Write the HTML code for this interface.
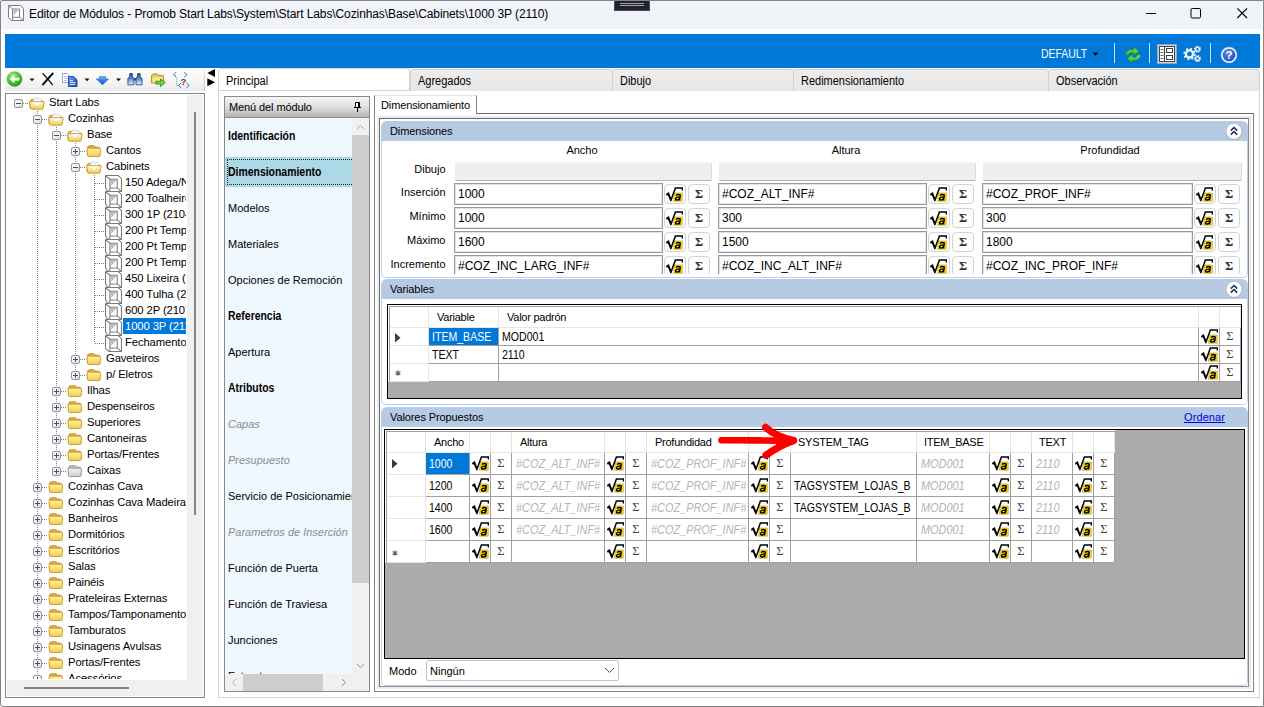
<!DOCTYPE html><html><head><meta charset="utf-8"><title>Editor de Módulos</title><style>
*{box-sizing:border-box;margin:0;padding:0}
html,body{width:1264px;height:707px;overflow:hidden;background:#fff}
body{font-family:"Liberation Sans",sans-serif;font-size:11px;color:#000;position:relative}
.a{position:absolute}
.t{position:absolute;white-space:pre;line-height:14px;height:14px}
.t12{font-size:12px}
.hdr{position:absolute;background:#b6cae4;border-radius:6px 6px 0 0;height:20px}
.hdr span{position:absolute;left:9px;top:3px;font-size:11px;letter-spacing:-0.1px;line-height:14px;white-space:pre}
.sec{position:absolute;border:1px solid #bdd0ea;border-top:none;border-radius:0 0 5px 5px;background:#fff}
.inp{position:absolute;height:22px;border:1px solid #989aa2;background:#fff;font-size:12px;line-height:20px;padding-left:3px;white-space:pre;overflow:hidden;box-shadow:inset 0 0 0 1px #e3e3e3}
.gin{position:absolute;height:19px;background:#efefef;border-bottom:1px solid #b4b4b4;border-right:1px solid #dadada;border-top:1px solid #f6f6f6;border-radius:2px}
.btn{position:absolute;width:22px;height:20px;border:1px solid #d2d2d2;border-radius:4px;background:#fdfdfd}
.lbl{position:absolute;text-align:right;white-space:pre;line-height:14px;font-size:11px}
.grid{position:absolute;background:#ababab;border:1px solid #000;overflow:hidden}
.cell{position:absolute;background:#fff;border-right:1px solid #a0a0a0;border-bottom:1px solid #a0a0a0;white-space:pre;overflow:hidden;font-size:12px}
.cell>span{display:inline-block;transform-origin:0 50%;transform:scaleX(.88)}
.hc{position:absolute;background:#fff;border-right:1px solid #e5e5e5;border-bottom:1px solid #e5e5e5;white-space:pre;overflow:hidden;font-size:11px;letter-spacing:-0.25px}
.gi{color:#b4b4b4;font-style:italic}
.cell.gi>span{transform:scaleX(.91);margin-left:1px}
.sel{background:#0078d7;color:#fff}
.tr{position:absolute;white-space:pre;line-height:16px;height:16px;font-size:11.25px;letter-spacing:-0.1px}
.mi{position:absolute;left:229px;white-space:pre;line-height:14px;font-size:11px}
.mb{font-weight:bold;font-size:12px;transform-origin:0 50%;transform:scaleX(.87)}
.mg{font-style:italic;color:#8c8c8c}
.tab{position:absolute;top:69px;height:22px;border:1px solid #d0d0d0;border-bottom:none;border-radius:4px 4px 0 0;background:linear-gradient(#ededed,#e6e6e6);font-size:12px;line-height:14px;white-space:pre}
.tab span{position:absolute;left:7px;top:4px;transform-origin:0 50%;transform:scaleX(.915)}
</style></head><body>
<svg width="0" height="0" style="position:absolute"><defs>
<linearGradient id="fog" x1="0" y1="0" x2="0" y2="1"><stop offset="0" stop-color="#fffadc"/><stop offset="1" stop-color="#f3c850"/></linearGradient>
<linearGradient id="fcg" x1="0" y1="0" x2="0" y2="1"><stop offset="0" stop-color="#fff6a8"/><stop offset="1" stop-color="#f5ca48"/></linearGradient>
<linearGradient id="fgg" x1="0" y1="0" x2="0" y2="1"><stop offset="0" stop-color="#f4f4f4"/><stop offset="1" stop-color="#cfcfcf"/></linearGradient>
<symbol id="sq" viewBox="0 0 17 16">
<path d="M8.600 6H16.300V14.200H7.400z" fill="#ffde0a" stroke="#8a6d00" stroke-width=".4"/>
<path d="M0.300 7.900 2.300 6.600 4.700 12.600" fill="none" stroke="#000" stroke-width="2"/>
<path d="M4.600 14.300 9.400 1H16.400V3.600" fill="none" stroke="#000" stroke-width="1.500"/>
<path d="M10 8.500Q12.200 6.700 14.300 8.100L13.400 13.400" stroke="#000" stroke-width="1.500" fill="none" stroke-linejoin="round"/><path d="M13.800 10.300Q10 9.700 9.500 11.700Q9.600 13.300 11.300 13Q13 12.600 13.600 11.200" stroke="#000" stroke-width="1.400" fill="none"/>
</symbol>
<symbol id="fo" viewBox="0 0 16 16">
<path d="M1 5 2.300 3.300H5.800L6.800 5H14V12H1z" fill="#e6b444" stroke="#c4922a" stroke-width=".9"/>
<path d="M2.600 6 7 1.300 9.300 3.600 10.700 2.200 14.200 6z" fill="#fff" stroke="#8da2d2" stroke-width=".6"/>
<path d="M0.700 5.700H15.200L14 12.600Q13.900 13.200 13.200 13.200H2.600Q1.900 13.200 1.800 12.600z" fill="url(#fog)" stroke="#cc9c30" stroke-width=".9"/>
<path d="M3.300 6.200 8 10 12.700 6.200z" fill="#fff" opacity=".75"/>
</symbol>
<symbol id="fc" viewBox="0 0 16 16">
<path d="M1.500 4Q1.500 1.700 3.500 1.700H7.500Q9 1.700 9.500 3.200H12.500Q13.800 3.200 13.800 4.700V11H1.500z" fill="#e0ae3e" stroke="#bc8c26" stroke-width=".9"/>
<path d="M1 5.200Q1 4.200 2.200 4.200H13.600Q14.600 4.200 14.500 5.200L14.100 11.600Q14 12.500 13 12.500H2.500Q1.500 12.500 1.500 11.600z" fill="url(#fcg)" stroke="#c8982c" stroke-width=".9"/>
</symbol>
<symbol id="fg" viewBox="0 0 16 16">
<path d="M1.500 4Q1.500 1.700 3.500 1.700H7.500Q9 1.700 9.500 3.200H12.500Q13.800 3.200 13.800 4.700V11H1.500z" fill="#c4c4c4" stroke="#8c8c8c" stroke-width=".9"/>
<path d="M1 5.200Q1 4.200 2.200 4.200H13.600Q14.600 4.200 14.500 5.200L14.100 11.600Q14 12.500 13 12.500H2.500Q1.500 12.500 1.500 11.600z" fill="url(#fgg)" stroke="#909090" stroke-width=".9"/>
</symbol>
<symbol id="mo" viewBox="0 0 16 16">
<path d="M0.500 0.500H12.500L15.500 3.500V15.500H3.500L0.500 12.500Z" fill="#fff" stroke="#7c7c7c"/>
<path d="M0.500 0.500 4.600 4M4.600 4V15.500M4.600 4H11.500V12.300H4.600M11.500 12.300 15.500 15.500" fill="none" stroke="#7c7c7c"/>
<path d="M5.300 4.700H10.900L5.300 10.500Z" fill="#bdbdbd"/>
</symbol>
<symbol id="chev" viewBox="0 0 18 18">
<circle cx="9.200" cy="9.900" r="8.300" fill="#8c96a8" opacity=".5"/>
<circle cx="9" cy="9.300" r="7.900" fill="#fff" stroke="#b8bec8" stroke-width=".7"/>
<path d="M5.800 8.600 9 5.500 12.200 8.600M5.800 12.600 9 9.500 12.200 12.600" fill="none" stroke="#1c2a5a" stroke-width="1.500"/>
</symbol>
</defs></svg>
<div class="a" style="left:0;top:0;width:1264px;height:707px;background:#fff"></div>
<div class="a" style="left:1px;top:1px;width:1261px;height:28px;background:#f0f3fa"></div>
<div class="a" style="left:0;top:0;width:1264px;height:707px;border:1px solid #858585;border-radius:2px 0 0 3px"></div>
<div class="a" style="left:614px;top:1px;width:36px;height:10px;background:#22222e;border:1px solid #4a4a52;border-top:none"><div class="a" style="left:5px;top:2px;width:24px;height:1px;background:#a4a4a8"></div><div class="a" style="left:5px;top:4px;width:24px;height:1px;background:#a4a4a8"></div></div>
<svg class="a" style="left:8px;top:5px" width="16" height="16"><use href="#mo"/></svg>
<div class="t" style="left:29px;top:7px;font-size:12px;letter-spacing:-0.1px;line-height:14px">Editor de Módulos - Promob Start Labs\System\Start Labs\Cozinhas\Base\Cabinets\1000 3P (2110)</div>
<svg class="a" style="left:1140px;top:4px" width="115" height="20"><path d="M6 9.5H16" stroke="#000" stroke-width="1"/><rect x="51" y="4.5" width="9.5" height="9.5" rx="1.3" fill="none" stroke="#000" stroke-width="1"/><path d="M97.300 4.300 107 14M107 4.300 97.300 14" stroke="#000" stroke-width="1.1"/></svg>
<div class="a" style="left:5px;top:34px;width:1255px;height:34px;background:#0078d7"></div>
<div class="t" style="left:1041px;top:47px;font-size:12px;color:#fff;transform-origin:0 50%;transform:scaleX(.87)">DEFAULT</div>
<svg class="a" style="left:1092px;top:52px" width="8" height="5"><path d="M0.500 0.500h6L3.500 3.800z" fill="#000"/></svg>
<div class="a" style="left:1114px;top:43px;width:1px;height:20px;background:#cfe3f6"></div>
<div class="a" style="left:1149px;top:43px;width:1px;height:20px;background:#cfe3f6"></div>
<div class="a" style="left:1210px;top:43px;width:1px;height:20px;background:#cfe3f6"></div>
<svg class="a" style="left:1124px;top:46px" width="18" height="18" viewBox="0 0 18 18">
<defs><linearGradient id="rg" x1="0" y1="0" x2="0" y2="1"><stop offset="0" stop-color="#8cea5c"/><stop offset="1" stop-color="#2fae22"/></linearGradient></defs>
<path d="M1.500 8.800C1.800 4.800 5.800 3 9.600 4V1.200L15 5.300 9.600 9.300V6.700C7 6 4.800 6.800 4.400 9.400z" fill="url(#rg)" stroke="#2a9220" stroke-width=".6"/>
<path d="M16.500 9.200C16.200 13.200 12.200 15 8.400 14V16.800L3 12.700 8.400 8.700V11.300C11 12 13.200 11.200 13.600 8.600z" fill="url(#rg)" stroke="#2a9220" stroke-width=".6"/></svg>
<div class="a" style="left:1157px;top:44px;width:20px;height:20px;background:#c9d6e6;border:1px solid #8ea6c4"></div>
<svg class="a" style="left:1159px;top:46px" width="16" height="16" viewBox="0 0 16 16">
<rect x=".5" y=".5" width="15" height="15" fill="#fff" stroke="#444" stroke-width="1"/>
<path d="M5.5 .5v15" stroke="#444"/>
<path d="M1.5 3.5h3M1.5 6.5h3M1.5 9.5h3M1.5 12.5h3" stroke="#666"/>
<rect x="7.5" y="2.5" width="6" height="4" fill="#fff" stroke="#444"/>
<rect x="7.5" y="9.5" width="6" height="4" fill="#fff" stroke="#444"/></svg>
<svg class="a" style="left:1183px;top:45px" width="19" height="18" viewBox="0 0 19 18">
<g fill="none" stroke="#f4f8fc">
<circle cx="6.5" cy="9" r="3.6" stroke-width="2.3"/>
<circle cx="6.5" cy="9" r="5.3" stroke-width="1.8" stroke-dasharray="2 2.15"/>
<circle cx="14.5" cy="4.2" r="1.9" stroke-width="1.3"/>
<circle cx="14.5" cy="4.2" r="3" stroke-width="1.1" stroke-dasharray="1.2 1.15"/>
<circle cx="14.5" cy="13.6" r="1.9" stroke-width="1.3"/>
<circle cx="14.5" cy="13.6" r="3" stroke-width="1.1" stroke-dasharray="1.2 1.15"/>
</g></svg>
<svg class="a" style="left:1220px;top:46px" width="18" height="18" viewBox="0 0 18 18">
<defs><radialGradient id="hg" cx=".4" cy=".3" r=".8"><stop offset="0" stop-color="#5c8cf0"/><stop offset="1" stop-color="#1d47c0"/></radialGradient></defs>
<circle cx="9" cy="9" r="8" fill="#eef3fb" stroke="#9fb8e4" stroke-width=".6"/>
<circle cx="9" cy="9" r="6.3" fill="url(#hg)"/>
<text x="9" y="13.2" text-anchor="middle" font-family="Liberation Sans" font-weight="bold" font-size="11.5" fill="#fff">?</text></svg>
<div class="a" style="left:5px;top:68px;width:200px;height:23px;background:linear-gradient(#fefefe,#f6f6f6 55%,#ebebeb);border-radius:0 0 0 3px"></div>
<svg class="a" style="left:5px;top:69px" width="200" height="22" viewBox="5 69 200 22">
<defs><radialGradient id="gg" cx=".38" cy=".28" r=".85"><stop offset="0" stop-color="#a6ee78"/><stop offset=".55" stop-color="#3fc02a"/><stop offset="1" stop-color="#168a14"/></radialGradient>
<linearGradient id="pg" x1="0" y1="0" x2="1" y2="1"><stop offset="0" stop-color="#6f9cec"/><stop offset="1" stop-color="#1a48ac"/></linearGradient>
<linearGradient id="bg2" x1="0" y1="0" x2="0" y2="1"><stop offset="0" stop-color="#2c4f9a"/><stop offset=".45" stop-color="#5f86cc"/><stop offset="1" stop-color="#eef4fd"/></linearGradient>
<linearGradient id="ag" x1="0" y1="0" x2="0" y2="1"><stop offset="0" stop-color="#7ab4f6"/><stop offset=".5" stop-color="#2f7ee0"/><stop offset="1" stop-color="#1c5cc0"/></linearGradient></defs>
<circle cx="14.600" cy="79.100" r="7.400" fill="url(#gg)" stroke="#27902a" stroke-width=".5"/>
<path d="M9.800 79.100 14.300 74.700V77.700H19.400V80.500H14.300V83.500z" fill="#fff"/>
<path d="M29.500 78.500h5l-2.500 2.800z" fill="#111"/>
<path d="M42.600 73.200C46 77 50 81.500 52.800 85" stroke="#222" stroke-width="1.300" fill="none"/><path d="M53.200 73C49.500 77 45.500 81.500 42.400 85.200" stroke="#111" stroke-width="1.900" fill="none"/>
<path d="M62.500 73.500h4.700l2.800 2.800v6.200h-7.500z" fill="#fff" stroke="#7f9ed6" stroke-width=".9"/>
<path d="M64 76.500h3.500M64 78.500h4M64 80.500h3" stroke="#8fb0e8" stroke-width=".8"/>
<path d="M68.500 76.500h5.200l3.300 3.300v6.700h-8.500z" fill="url(#pg)" stroke="#1d3f94" stroke-width=".9"/>
<path d="M70 80.500h3M70 82.500h5.500M70 84.500h5.500" stroke="#e8f0ff" stroke-width=".9"/>
<path d="M84.500 78.500h5l-2.500 2.800z" fill="#111"/>
<path d="M99.300 76.700h6.300v2.300h3l-6.100 5.700-6.200-5.700h3z" fill="url(#ag)" stroke="#1d57b4" stroke-width=".6"/>
<path d="M116 78.500h5l-2.500 2.800z" fill="#111"/>
<g stroke="#1d3870" stroke-width=".8"><path d="M129.800 73.600h2.600v2.600l1.500 2.300v6.300h-6v-6.300l1.900-2.300z" fill="url(#bg2)"/><path d="M137.500 73.600h2.600v2.600l1.900 2.300v6.300h-6v-6.300l1.500-2.300z" fill="url(#bg2)"/></g>
<path d="M133.900 78h2.100v2.600h-2.100z" fill="#2c4f9a"/>
<path d="M151.500 75.500 153 74h4.500l1 1.500h5v7.500h-12z" fill="#eec75c" stroke="#b08828" stroke-width=".9"/>
<path d="M152.500 77.200h10.500v5.300h-10.500z" fill="#fbe48e"/>
<path d="M155.800 81.300h4.700v-2.400l4.800 3.800-4.800 3.800v-2.400h-4.700z" fill="#6fd83a" stroke="#2a8a18" stroke-width=".8"/>
<g fill="none" stroke="#1f6be6" stroke-width="1"><path d="M176.200 72.300 173.600 74.700 176.200 77.100M184.300 72.300 186.900 74.700 184.300 77.100M181 83 178.400 85.400 181 87.800M186.500 83 189.100 85.400 186.500 87.800"/><path d="M176.700 77.500V85.400H178.500" stroke="#25a8e8" stroke-dasharray="1 1"/></g>
<text x="180.600" y="85.200" font-family="Liberation Sans" font-weight="bold" font-size="9.500" fill="#6a3a12">?</text>
</svg>
<div class="a" style="left:204px;top:70px;width:1px;height:21px;background:linear-gradient(#e4e4e4,#bdbdbd)"></div>
<svg class="a" style="left:207px;top:69px" width="9" height="18"><path d="M8 0V8L0.300 4zM0.300 9.300V17.300L8 13.300z" fill="#000"/></svg>
<div class="a" style="left:5px;top:93px;width:200px;height:605px;border:1px solid #828790;background:#fff"></div>
<div class="a" style="left:187px;top:95px;width:16px;height:585px;background:#f0f0f0"></div>
<div class="a" style="left:7px;top:680px;width:196px;height:16px;background:#f0f0f0"></div>
<div class="a" style="left:194px;top:112px;width:2px;height:403px;background:#848484"></div>
<div class="a" style="left:24px;top:687px;width:105px;height:2px;background:#848484"></div>
<div class="a" style="left:6px;top:95px;width:180px;height:584px;overflow:hidden">
<svg class="a" style="left:0;top:0" width="181" height="600" shape-rendering="crispEdges"><defs><linearGradient id="bxg" x1="0" y1="0" x2="1" y2="1"><stop offset="0" stop-color="#fff"/><stop offset="1" stop-color="#dcdcdc"/></linearGradient></defs><path d="M17 8.5H23" stroke="#808080" stroke-width="1" stroke-dasharray="1 1"/><path d="M36 24.5H42" stroke="#808080" stroke-width="1" stroke-dasharray="1 1"/><path d="M55 40.5H61" stroke="#808080" stroke-width="1" stroke-dasharray="1 1"/><path d="M74 56.5H80" stroke="#808080" stroke-width="1" stroke-dasharray="1 1"/><path d="M74 72.5H80" stroke="#808080" stroke-width="1" stroke-dasharray="1 1"/><path d="M89 88.5H99" stroke="#808080" stroke-width="1" stroke-dasharray="1 1"/><path d="M89 104.5H99" stroke="#808080" stroke-width="1" stroke-dasharray="1 1"/><path d="M89 120.5H99" stroke="#808080" stroke-width="1" stroke-dasharray="1 1"/><path d="M89 136.5H99" stroke="#808080" stroke-width="1" stroke-dasharray="1 1"/><path d="M89 152.5H99" stroke="#808080" stroke-width="1" stroke-dasharray="1 1"/><path d="M89 168.5H99" stroke="#808080" stroke-width="1" stroke-dasharray="1 1"/><path d="M89 184.5H99" stroke="#808080" stroke-width="1" stroke-dasharray="1 1"/><path d="M89 200.5H99" stroke="#808080" stroke-width="1" stroke-dasharray="1 1"/><path d="M89 216.5H99" stroke="#808080" stroke-width="1" stroke-dasharray="1 1"/><path d="M89 232.5H99" stroke="#808080" stroke-width="1" stroke-dasharray="1 1"/><path d="M89 248.5H99" stroke="#808080" stroke-width="1" stroke-dasharray="1 1"/><path d="M74 264.5H80" stroke="#808080" stroke-width="1" stroke-dasharray="1 1"/><path d="M74 280.5H80" stroke="#808080" stroke-width="1" stroke-dasharray="1 1"/><path d="M55 296.5H61" stroke="#808080" stroke-width="1" stroke-dasharray="1 1"/><path d="M55 312.5H61" stroke="#808080" stroke-width="1" stroke-dasharray="1 1"/><path d="M55 328.5H61" stroke="#808080" stroke-width="1" stroke-dasharray="1 1"/><path d="M55 344.5H61" stroke="#808080" stroke-width="1" stroke-dasharray="1 1"/><path d="M55 360.5H61" stroke="#808080" stroke-width="1" stroke-dasharray="1 1"/><path d="M55 376.5H61" stroke="#808080" stroke-width="1" stroke-dasharray="1 1"/><path d="M36 392.5H42" stroke="#808080" stroke-width="1" stroke-dasharray="1 1"/><path d="M36 408.5H42" stroke="#808080" stroke-width="1" stroke-dasharray="1 1"/><path d="M36 424.5H42" stroke="#808080" stroke-width="1" stroke-dasharray="1 1"/><path d="M36 440.5H42" stroke="#808080" stroke-width="1" stroke-dasharray="1 1"/><path d="M36 456.5H42" stroke="#808080" stroke-width="1" stroke-dasharray="1 1"/><path d="M36 472.5H42" stroke="#808080" stroke-width="1" stroke-dasharray="1 1"/><path d="M36 488.5H42" stroke="#808080" stroke-width="1" stroke-dasharray="1 1"/><path d="M36 504.5H42" stroke="#808080" stroke-width="1" stroke-dasharray="1 1"/><path d="M36 520.5H42" stroke="#808080" stroke-width="1" stroke-dasharray="1 1"/><path d="M36 536.5H42" stroke="#808080" stroke-width="1" stroke-dasharray="1 1"/><path d="M36 552.5H42" stroke="#808080" stroke-width="1" stroke-dasharray="1 1"/><path d="M36 568.5H42" stroke="#808080" stroke-width="1" stroke-dasharray="1 1"/><path d="M36 584.5H42" stroke="#808080" stroke-width="1" stroke-dasharray="1 1"/><path d="M31.5 16V584" stroke="#808080" stroke-width="1" stroke-dasharray="1 1"/><path d="M50.5 32V376" stroke="#808080" stroke-width="1" stroke-dasharray="1 1"/><path d="M69.5 48V280" stroke="#808080" stroke-width="1" stroke-dasharray="1 1"/><path d="M88.5 80V248" stroke="#808080" stroke-width="1" stroke-dasharray="1 1"/><rect x="8.5" y="4.5" width="8" height="8" rx="1.500" fill="url(#bxg)" stroke="#959595" shape-rendering="auto"/><path d="M10 8.5H15" stroke="#3a4c92" stroke-width="1"/><rect x="27.5" y="20.5" width="8" height="8" rx="1.500" fill="url(#bxg)" stroke="#959595" shape-rendering="auto"/><path d="M29 24.5H34" stroke="#3a4c92" stroke-width="1"/><rect x="46.5" y="36.5" width="8" height="8" rx="1.500" fill="url(#bxg)" stroke="#959595" shape-rendering="auto"/><path d="M48 40.5H53" stroke="#3a4c92" stroke-width="1"/><rect x="65.5" y="52.5" width="8" height="8" rx="1.500" fill="url(#bxg)" stroke="#959595" shape-rendering="auto"/><path d="M67 56.5H72" stroke="#3a4c92" stroke-width="1"/><path d="M69.5 54V59" stroke="#3a4c92" stroke-width="1"/><rect x="65.5" y="68.5" width="8" height="8" rx="1.500" fill="url(#bxg)" stroke="#959595" shape-rendering="auto"/><path d="M67 72.5H72" stroke="#3a4c92" stroke-width="1"/><rect x="65.5" y="260.5" width="8" height="8" rx="1.500" fill="url(#bxg)" stroke="#959595" shape-rendering="auto"/><path d="M67 264.5H72" stroke="#3a4c92" stroke-width="1"/><path d="M69.5 262V267" stroke="#3a4c92" stroke-width="1"/><rect x="65.5" y="276.5" width="8" height="8" rx="1.500" fill="url(#bxg)" stroke="#959595" shape-rendering="auto"/><path d="M67 280.5H72" stroke="#3a4c92" stroke-width="1"/><path d="M69.5 278V283" stroke="#3a4c92" stroke-width="1"/><rect x="46.5" y="292.5" width="8" height="8" rx="1.500" fill="url(#bxg)" stroke="#959595" shape-rendering="auto"/><path d="M48 296.5H53" stroke="#3a4c92" stroke-width="1"/><path d="M50.5 294V299" stroke="#3a4c92" stroke-width="1"/><rect x="46.5" y="308.5" width="8" height="8" rx="1.500" fill="url(#bxg)" stroke="#959595" shape-rendering="auto"/><path d="M48 312.5H53" stroke="#3a4c92" stroke-width="1"/><path d="M50.5 310V315" stroke="#3a4c92" stroke-width="1"/><rect x="46.5" y="324.5" width="8" height="8" rx="1.500" fill="url(#bxg)" stroke="#959595" shape-rendering="auto"/><path d="M48 328.5H53" stroke="#3a4c92" stroke-width="1"/><path d="M50.5 326V331" stroke="#3a4c92" stroke-width="1"/><rect x="46.5" y="340.5" width="8" height="8" rx="1.500" fill="url(#bxg)" stroke="#959595" shape-rendering="auto"/><path d="M48 344.5H53" stroke="#3a4c92" stroke-width="1"/><path d="M50.5 342V347" stroke="#3a4c92" stroke-width="1"/><rect x="46.5" y="356.5" width="8" height="8" rx="1.500" fill="url(#bxg)" stroke="#959595" shape-rendering="auto"/><path d="M48 360.5H53" stroke="#3a4c92" stroke-width="1"/><path d="M50.5 358V363" stroke="#3a4c92" stroke-width="1"/><rect x="46.5" y="372.5" width="8" height="8" rx="1.500" fill="url(#bxg)" stroke="#959595" shape-rendering="auto"/><path d="M48 376.5H53" stroke="#3a4c92" stroke-width="1"/><path d="M50.5 374V379" stroke="#3a4c92" stroke-width="1"/><rect x="27.5" y="388.5" width="8" height="8" rx="1.500" fill="url(#bxg)" stroke="#959595" shape-rendering="auto"/><path d="M29 392.5H34" stroke="#3a4c92" stroke-width="1"/><path d="M31.5 390V395" stroke="#3a4c92" stroke-width="1"/><rect x="27.5" y="404.5" width="8" height="8" rx="1.500" fill="url(#bxg)" stroke="#959595" shape-rendering="auto"/><path d="M29 408.5H34" stroke="#3a4c92" stroke-width="1"/><path d="M31.5 406V411" stroke="#3a4c92" stroke-width="1"/><rect x="27.5" y="420.5" width="8" height="8" rx="1.500" fill="url(#bxg)" stroke="#959595" shape-rendering="auto"/><path d="M29 424.5H34" stroke="#3a4c92" stroke-width="1"/><path d="M31.5 422V427" stroke="#3a4c92" stroke-width="1"/><rect x="27.5" y="436.5" width="8" height="8" rx="1.500" fill="url(#bxg)" stroke="#959595" shape-rendering="auto"/><path d="M29 440.5H34" stroke="#3a4c92" stroke-width="1"/><path d="M31.5 438V443" stroke="#3a4c92" stroke-width="1"/><rect x="27.5" y="452.5" width="8" height="8" rx="1.500" fill="url(#bxg)" stroke="#959595" shape-rendering="auto"/><path d="M29 456.5H34" stroke="#3a4c92" stroke-width="1"/><path d="M31.5 454V459" stroke="#3a4c92" stroke-width="1"/><rect x="27.5" y="468.5" width="8" height="8" rx="1.500" fill="url(#bxg)" stroke="#959595" shape-rendering="auto"/><path d="M29 472.5H34" stroke="#3a4c92" stroke-width="1"/><path d="M31.5 470V475" stroke="#3a4c92" stroke-width="1"/><rect x="27.5" y="484.5" width="8" height="8" rx="1.500" fill="url(#bxg)" stroke="#959595" shape-rendering="auto"/><path d="M29 488.5H34" stroke="#3a4c92" stroke-width="1"/><path d="M31.5 486V491" stroke="#3a4c92" stroke-width="1"/><rect x="27.5" y="500.5" width="8" height="8" rx="1.500" fill="url(#bxg)" stroke="#959595" shape-rendering="auto"/><path d="M29 504.5H34" stroke="#3a4c92" stroke-width="1"/><path d="M31.5 502V507" stroke="#3a4c92" stroke-width="1"/><rect x="27.5" y="516.5" width="8" height="8" rx="1.500" fill="url(#bxg)" stroke="#959595" shape-rendering="auto"/><path d="M29 520.5H34" stroke="#3a4c92" stroke-width="1"/><path d="M31.5 518V523" stroke="#3a4c92" stroke-width="1"/><rect x="27.5" y="532.5" width="8" height="8" rx="1.500" fill="url(#bxg)" stroke="#959595" shape-rendering="auto"/><path d="M29 536.5H34" stroke="#3a4c92" stroke-width="1"/><path d="M31.5 534V539" stroke="#3a4c92" stroke-width="1"/><rect x="27.5" y="548.5" width="8" height="8" rx="1.500" fill="url(#bxg)" stroke="#959595" shape-rendering="auto"/><path d="M29 552.5H34" stroke="#3a4c92" stroke-width="1"/><path d="M31.5 550V555" stroke="#3a4c92" stroke-width="1"/><rect x="27.5" y="564.5" width="8" height="8" rx="1.500" fill="url(#bxg)" stroke="#959595" shape-rendering="auto"/><path d="M29 568.5H34" stroke="#3a4c92" stroke-width="1"/><path d="M31.5 566V571" stroke="#3a4c92" stroke-width="1"/><rect x="27.5" y="580.5" width="8" height="8" rx="1.500" fill="url(#bxg)" stroke="#959595" shape-rendering="auto"/><path d="M29 584.5H34" stroke="#3a4c92" stroke-width="1"/><path d="M31.5 582V587" stroke="#3a4c92" stroke-width="1"/></svg>
<svg class="a" style="left:23px;top:1px" width="16" height="16"><use href="#fo"/></svg>
<div class="tr" style="left:43px;top:-1px">Start Labs</div>
<svg class="a" style="left:42px;top:17px" width="16" height="16"><use href="#fo"/></svg>
<div class="tr" style="left:62px;top:15px">Cozinhas</div>
<svg class="a" style="left:61px;top:33px" width="16" height="16"><use href="#fo"/></svg>
<div class="tr" style="left:81px;top:31px">Base</div>
<svg class="a" style="left:80px;top:49px" width="16" height="16"><use href="#fc"/></svg>
<div class="tr" style="left:100px;top:47px">Cantos</div>
<svg class="a" style="left:80px;top:65px" width="16" height="16"><use href="#fo"/></svg>
<div class="tr" style="left:100px;top:63px">Cabinets</div>
<svg class="a" style="left:99px;top:80px" width="17" height="17"><use href="#mo"/></svg>
<div class="tr" style="left:119px;top:79px">150 Adega/Nicho</div>
<svg class="a" style="left:99px;top:96px" width="17" height="17"><use href="#mo"/></svg>
<div class="tr" style="left:119px;top:95px">200 Toalheiro</div>
<svg class="a" style="left:99px;top:112px" width="17" height="17"><use href="#mo"/></svg>
<div class="tr" style="left:119px;top:111px">300 1P (2104)</div>
<svg class="a" style="left:99px;top:128px" width="17" height="17"><use href="#mo"/></svg>
<div class="tr" style="left:119px;top:127px">200 Pt Temp</div>
<svg class="a" style="left:99px;top:144px" width="17" height="17"><use href="#mo"/></svg>
<div class="tr" style="left:119px;top:143px">200 Pt Temp</div>
<svg class="a" style="left:99px;top:160px" width="17" height="17"><use href="#mo"/></svg>
<div class="tr" style="left:119px;top:159px">200 Pt Temp</div>
<svg class="a" style="left:99px;top:176px" width="17" height="17"><use href="#mo"/></svg>
<div class="tr" style="left:119px;top:175px">450 Lixeira (</div>
<svg class="a" style="left:99px;top:192px" width="17" height="17"><use href="#mo"/></svg>
<div class="tr" style="left:119px;top:191px">400 Tulha (2</div>
<svg class="a" style="left:99px;top:208px" width="17" height="17"><use href="#mo"/></svg>
<div class="tr" style="left:119px;top:207px">600 2P (2107)</div>
<svg class="a" style="left:99px;top:224px" width="17" height="17"><use href="#mo"/></svg>
<div class="a" style="left:117px;top:223px;width:80px;height:16px;background:#0078d7"></div>
<div class="tr" style="left:119px;top:223px;color:#fff">1000 3P (2110)</div>
<svg class="a" style="left:99px;top:240px" width="17" height="17"><use href="#mo"/></svg>
<div class="tr" style="left:119px;top:239px">Fechamento</div>
<svg class="a" style="left:80px;top:257px" width="16" height="16"><use href="#fc"/></svg>
<div class="tr" style="left:100px;top:255px">Gaveteiros</div>
<svg class="a" style="left:80px;top:273px" width="16" height="16"><use href="#fc"/></svg>
<div class="tr" style="left:100px;top:271px">p/ Eletros</div>
<svg class="a" style="left:61px;top:289px" width="16" height="16"><use href="#fc"/></svg>
<div class="tr" style="left:81px;top:287px">Ilhas</div>
<svg class="a" style="left:61px;top:305px" width="16" height="16"><use href="#fc"/></svg>
<div class="tr" style="left:81px;top:303px">Despenseiros</div>
<svg class="a" style="left:61px;top:321px" width="16" height="16"><use href="#fc"/></svg>
<div class="tr" style="left:81px;top:319px">Superiores</div>
<svg class="a" style="left:61px;top:337px" width="16" height="16"><use href="#fc"/></svg>
<div class="tr" style="left:81px;top:335px">Cantoneiras</div>
<svg class="a" style="left:61px;top:353px" width="16" height="16"><use href="#fc"/></svg>
<div class="tr" style="left:81px;top:351px">Portas/Frentes</div>
<svg class="a" style="left:61px;top:369px" width="16" height="16"><use href="#fg"/></svg>
<div class="tr" style="left:81px;top:367px">Caixas</div>
<svg class="a" style="left:42px;top:385px" width="16" height="16"><use href="#fc"/></svg>
<div class="tr" style="left:62px;top:383px">Cozinhas Cava</div>
<svg class="a" style="left:42px;top:401px" width="16" height="16"><use href="#fc"/></svg>
<div class="tr" style="left:62px;top:399px">Cozinhas Cava Madeira</div>
<svg class="a" style="left:42px;top:417px" width="16" height="16"><use href="#fc"/></svg>
<div class="tr" style="left:62px;top:415px">Banheiros</div>
<svg class="a" style="left:42px;top:433px" width="16" height="16"><use href="#fc"/></svg>
<div class="tr" style="left:62px;top:431px">Dormitórios</div>
<svg class="a" style="left:42px;top:449px" width="16" height="16"><use href="#fc"/></svg>
<div class="tr" style="left:62px;top:447px">Escritórios</div>
<svg class="a" style="left:42px;top:465px" width="16" height="16"><use href="#fc"/></svg>
<div class="tr" style="left:62px;top:463px">Salas</div>
<svg class="a" style="left:42px;top:481px" width="16" height="16"><use href="#fc"/></svg>
<div class="tr" style="left:62px;top:479px">Painéis</div>
<svg class="a" style="left:42px;top:497px" width="16" height="16"><use href="#fc"/></svg>
<div class="tr" style="left:62px;top:495px">Prateleiras Externas</div>
<svg class="a" style="left:42px;top:513px" width="16" height="16"><use href="#fc"/></svg>
<div class="tr" style="left:62px;top:511px">Tampos/Tamponamento</div>
<svg class="a" style="left:42px;top:529px" width="16" height="16"><use href="#fc"/></svg>
<div class="tr" style="left:62px;top:527px">Tamburatos</div>
<svg class="a" style="left:42px;top:545px" width="16" height="16"><use href="#fc"/></svg>
<div class="tr" style="left:62px;top:543px">Usinagens Avulsas</div>
<svg class="a" style="left:42px;top:561px" width="16" height="16"><use href="#fc"/></svg>
<div class="tr" style="left:62px;top:559px">Portas/Frentes</div>
<svg class="a" style="left:42px;top:577px" width="16" height="16"><use href="#fc"/></svg>
<div class="tr" style="left:62px;top:575px">Acessórios</div>
</div>
<div class="a" style="left:218px;top:90px;width:1042px;height:608px;border:1px solid #d5d5d5;background:#fff"></div>
<div class="tab" style="left:410px;width:203px"><span>Agregados</span></div>
<div class="tab" style="left:612px;width:182px"><span>Dibujo</span></div>
<div class="tab" style="left:793px;width:256px"><span>Redimensionamiento</span></div>
<div class="tab" style="left:1048px;width:212px"><span>Observación</span></div>
<div class="tab" style="left:218px;width:192px;top:68px;height:22px;background:#fff;border-color:#d5d5d5"><span style="top:5px">Principal</span></div>
<div class="a" style="left:224px;top:96px;width:146px;height:596px;border:1px solid #8a8a8a;background:#f0f8ff"></div>
<div class="a" style="left:225px;top:97px;width:144px;height:21px;background:linear-gradient(#f6f6f6,#dcdcdc 55%,#b4b4b4);border-bottom:1px solid #8f8f8f"></div>
<div class="t" style="left:229px;top:100px;font-size:11px;letter-spacing:-0.1px">Menú del módulo</div>
<svg class="a" style="left:353px;top:101px" width="9" height="12"><path d="M2.500 1.500h4v5h-4zM1 6.500h7M4.500 6.500V11" fill="#fff" stroke="#000" stroke-width="1"/><path d="M5.500 2v4" stroke="#000"/></svg>
<div class="a" style="left:225px;top:157px;width:127px;height:30px;background:#add8e6"></div><div class="a" style="left:227px;top:159px;width:125px;height:26px;border:1px dotted #222;border-right:none"></div>
<div class="a" style="left:226px;top:118px;width:126px;height:556px;overflow:hidden">
<div class="mi mb" style="left:2px;top:11px">Identificación</div>
<div class="mi mb" style="left:2px;top:47px">Dimensionamiento</div>
<div class="mi " style="left:2px;top:83px">Modelos</div>
<div class="mi " style="left:2px;top:119px">Materiales</div>
<div class="mi " style="left:2px;top:155px">Opciones de Remoción</div>
<div class="mi mb" style="left:2px;top:191px">Referencia</div>
<div class="mi " style="left:2px;top:227px">Apertura</div>
<div class="mi mb" style="left:2px;top:263px">Atributos</div>
<div class="mi mg" style="left:2px;top:299px">Capas</div>
<div class="mi mg" style="left:2px;top:335px">Presupuesto</div>
<div class="mi " style="left:2px;top:371px">Servicio de Posicionamiento</div>
<div class="mi mg" style="left:2px;top:407px">Parametros de Inserción</div>
<div class="mi " style="left:2px;top:443px">Función de Puerta</div>
<div class="mi " style="left:2px;top:479px">Función de Traviesa</div>
<div class="mi " style="left:2px;top:515px">Junciones</div>
<div class="mi " style="left:2px;top:551px">Estructura</div>
</div>
<div class="a" style="left:352px;top:118px;width:17px;height:556px;background:#f0f0f0"></div>
<div class="a" style="left:352px;top:135px;width:17px;height:448px;background:#cdcdcd"></div>
<svg class="a" style="left:356px;top:124px" width="9" height="6"><path d="M1 5 4.500 1.500 8 5" fill="none" stroke="#a8a8a8" stroke-width="1"/></svg>
<svg class="a" style="left:356px;top:663px" width="9" height="6"><path d="M1 1 4.500 4.500 8 1" fill="none" stroke="#989898" stroke-width="1"/></svg>
<div class="a" style="left:225px;top:674px;width:144px;height:17px;background:#f0f0f0"></div>
<div class="a" style="left:243px;top:674px;width:80px;height:17px;background:#cdcdcd"></div>
<svg class="a" style="left:231px;top:678px" width="6" height="9"><path d="M5 1 1.500 4.500 5 8" fill="none" stroke="#b0b0b0" stroke-width="1"/></svg>
<svg class="a" style="left:341px;top:678px" width="6" height="9"><path d="M1 1 4.500 4.500 1 8" fill="none" stroke="#8c8c8c" stroke-width="1"/></svg>
<div class="a" style="left:374px;top:113px;width:880px;height:579px;border:1px solid #828282;border-top-color:#6e6e6e;background:#fff"></div>
<div class="a" style="left:374px;top:95px;width:103px;height:19px;border:1px solid #828282;border-top-color:#e4e4e4;border-bottom:none;background:#fff"></div>
<div class="t" style="left:381px;top:98px;font-size:11px;letter-spacing:-0.13px">Dimensionamiento</div>
<div class="a" style="left:377px;top:116px;width:874px;height:573px;border:2px solid #ececec;background:#fff"></div><div class="a" style="left:379px;top:118px;width:870px;height:569px;border:1px solid #6e6e6e;border-right-color:#8c8c8c;border-bottom-color:#8c8c8c;background:#fff"></div>
<div class="hdr" style="left:381px;top:121px;width:867px"><span>Dimensiones</span></div>
<div class="sec" style="left:381px;top:141px;width:867px;height:137px"></div>
<svg class="a" style="left:1225px;top:122px" width="18" height="18"><use href="#chev"/></svg>
<div class="t" style="left:532px;top:143px;width:100px;text-align:center;font-size:11px">Ancho</div>
<div class="gin" style="left:455px;top:162px;width:257px"></div>
<div class="t" style="left:796px;top:143px;width:100px;text-align:center;font-size:11px">Altura</div>
<div class="gin" style="left:719px;top:162px;width:257px"></div>
<div class="t" style="left:1060px;top:143px;width:100px;text-align:center;font-size:11px">Profundidad</div>
<div class="gin" style="left:983px;top:162px;width:259px"></div>
<div class="lbl" style="left:380px;top:162px;width:65.500px">Dibujo</div>
<div class="lbl" style="left:380px;top:185px;width:65.500px">Inserción</div>
<div class="lbl" style="left:380px;top:209px;width:65.500px">Mínimo</div>
<div class="lbl" style="left:380px;top:233px;width:65.500px">Máximo</div>
<div class="lbl" style="left:380px;top:257px;width:65.500px">Incremento</div>
<div class="a" style="left:381px;top:141px;width:866px;height:133px;overflow:hidden">
<div class="inp" style="left:73px;top:42px;width:209px">1000</div>
<div class="btn" style="left:283px;top:43px"><svg class="a" style="left:1px;top:2px" width="17" height="16"><use href="#sq"/></svg></div>
<div class="btn" style="left:307px;top:43px"><div class="a" style="left:0;top:0;width:20px;text-align:center;font-family:'Liberation Serif',serif;font-weight:bold;font-size:12.500px;line-height:18px;color:#333">Σ</div></div>
<div class="inp" style="left:337px;top:42px;width:209px">#COZ_ALT_INF#</div>
<div class="btn" style="left:547px;top:43px"><svg class="a" style="left:1px;top:2px" width="17" height="16"><use href="#sq"/></svg></div>
<div class="btn" style="left:571px;top:43px"><div class="a" style="left:0;top:0;width:20px;text-align:center;font-family:'Liberation Serif',serif;font-weight:bold;font-size:12.500px;line-height:18px;color:#333">Σ</div></div>
<div class="inp" style="left:601px;top:42px;width:211px">#COZ_PROF_INF#</div>
<div class="btn" style="left:813px;top:43px"><svg class="a" style="left:1px;top:2px" width="17" height="16"><use href="#sq"/></svg></div>
<div class="btn" style="left:837px;top:43px"><div class="a" style="left:0;top:0;width:20px;text-align:center;font-family:'Liberation Serif',serif;font-weight:bold;font-size:12.500px;line-height:18px;color:#333">Σ</div></div>
<div class="inp" style="left:73px;top:66px;width:209px">1000</div>
<div class="btn" style="left:283px;top:67px"><svg class="a" style="left:1px;top:2px" width="17" height="16"><use href="#sq"/></svg></div>
<div class="btn" style="left:307px;top:67px"><div class="a" style="left:0;top:0;width:20px;text-align:center;font-family:'Liberation Serif',serif;font-weight:bold;font-size:12.500px;line-height:18px;color:#333">Σ</div></div>
<div class="inp" style="left:337px;top:66px;width:209px">300</div>
<div class="btn" style="left:547px;top:67px"><svg class="a" style="left:1px;top:2px" width="17" height="16"><use href="#sq"/></svg></div>
<div class="btn" style="left:571px;top:67px"><div class="a" style="left:0;top:0;width:20px;text-align:center;font-family:'Liberation Serif',serif;font-weight:bold;font-size:12.500px;line-height:18px;color:#333">Σ</div></div>
<div class="inp" style="left:601px;top:66px;width:211px">300</div>
<div class="btn" style="left:813px;top:67px"><svg class="a" style="left:1px;top:2px" width="17" height="16"><use href="#sq"/></svg></div>
<div class="btn" style="left:837px;top:67px"><div class="a" style="left:0;top:0;width:20px;text-align:center;font-family:'Liberation Serif',serif;font-weight:bold;font-size:12.500px;line-height:18px;color:#333">Σ</div></div>
<div class="inp" style="left:73px;top:90px;width:209px">1600</div>
<div class="btn" style="left:283px;top:91px"><svg class="a" style="left:1px;top:2px" width="17" height="16"><use href="#sq"/></svg></div>
<div class="btn" style="left:307px;top:91px"><div class="a" style="left:0;top:0;width:20px;text-align:center;font-family:'Liberation Serif',serif;font-weight:bold;font-size:12.500px;line-height:18px;color:#333">Σ</div></div>
<div class="inp" style="left:337px;top:90px;width:209px">1500</div>
<div class="btn" style="left:547px;top:91px"><svg class="a" style="left:1px;top:2px" width="17" height="16"><use href="#sq"/></svg></div>
<div class="btn" style="left:571px;top:91px"><div class="a" style="left:0;top:0;width:20px;text-align:center;font-family:'Liberation Serif',serif;font-weight:bold;font-size:12.500px;line-height:18px;color:#333">Σ</div></div>
<div class="inp" style="left:601px;top:90px;width:211px">1800</div>
<div class="btn" style="left:813px;top:91px"><svg class="a" style="left:1px;top:2px" width="17" height="16"><use href="#sq"/></svg></div>
<div class="btn" style="left:837px;top:91px"><div class="a" style="left:0;top:0;width:20px;text-align:center;font-family:'Liberation Serif',serif;font-weight:bold;font-size:12.500px;line-height:18px;color:#333">Σ</div></div>
<div class="inp" style="left:73px;top:114px;width:209px">#COZ_INC_LARG_INF#</div>
<div class="btn" style="left:283px;top:115px"><svg class="a" style="left:1px;top:2px" width="17" height="16"><use href="#sq"/></svg></div>
<div class="btn" style="left:307px;top:115px"><div class="a" style="left:0;top:0;width:20px;text-align:center;font-family:'Liberation Serif',serif;font-weight:bold;font-size:12.500px;line-height:18px;color:#333">Σ</div></div>
<div class="inp" style="left:337px;top:114px;width:209px">#COZ_INC_ALT_INF#</div>
<div class="btn" style="left:547px;top:115px"><svg class="a" style="left:1px;top:2px" width="17" height="16"><use href="#sq"/></svg></div>
<div class="btn" style="left:571px;top:115px"><div class="a" style="left:0;top:0;width:20px;text-align:center;font-family:'Liberation Serif',serif;font-weight:bold;font-size:12.500px;line-height:18px;color:#333">Σ</div></div>
<div class="inp" style="left:601px;top:114px;width:211px">#COZ_INC_PROF_INF#</div>
<div class="btn" style="left:813px;top:115px"><svg class="a" style="left:1px;top:2px" width="17" height="16"><use href="#sq"/></svg></div>
<div class="btn" style="left:837px;top:115px"><div class="a" style="left:0;top:0;width:20px;text-align:center;font-family:'Liberation Serif',serif;font-weight:bold;font-size:12.500px;line-height:18px;color:#333">Σ</div></div>
</div>
<div class="hdr" style="left:381px;top:279px;width:867px"><span>Variables</span></div>
<div class="sec" style="left:381px;top:299px;width:867px;height:106px"></div>
<svg class="a" style="left:1225px;top:280px" width="18" height="18"><use href="#chev"/></svg>
<div class="grid" style="left:387px;top:304px;width:855px;height:95px">
<div class="a" style="left:0;top:0;width:853px;height:77px;background:#fff"></div><div class="a" style="left:1px;top:1px;width:852px;height:76px;background:#a0a0a0"></div>
<div class="hc" style="left:2px;top:2px;width:39px;height:21px;line-height:20px;padding-left:3px;"></div>
<div class="hc" style="left:41px;top:2px;width:70px;height:21px;line-height:20px;padding-left:8px;">Variable</div>
<div class="hc" style="left:111px;top:2px;width:700px;height:21px;line-height:20px;padding-left:8px;">Valor padrón</div>
<div class="hc" style="left:811px;top:2px;width:21px;height:21px;line-height:20px;padding-left:3px;"></div>
<div class="hc" style="left:832px;top:2px;width:21px;height:21px;line-height:20px;padding-left:3px;"></div>
<div class="hc" style="left:2px;top:23px;width:39px;height:18px;line-height:17px;padding-left:0px;"><svg class="a" style="left:5px;top:5px" width="6" height="10"><path d="M0 0 5.500 4.700 0 9.400z" fill="#3c3c3c"/></svg></div>
<div class="cell sel" style="left:41px;top:23px;width:70px;height:18px;line-height:19px;padding-left:3px;"><span>ITEM_BASE</span></div>
<div class="cell" style="left:111px;top:23px;width:700px;height:18px;line-height:19px;padding-left:3px;"><span>MOD001</span></div>
<div class="cell" style="left:811px;top:23px;width:21px;height:18px;line-height:19px;padding-left:0px;"><svg class="a" style="left:2px;top:1px" width="17" height="16"><use href="#sq"/></svg></div>
<div class="cell" style="left:832px;top:23px;width:21px;height:18px;line-height:19px;padding-left:0px;"><div class="a" style="left:0;top:0;width:20px;text-align:center;font-family:'Liberation Serif',serif;font-size:12.500px;line-height:17px;color:#444">Σ</div></div>
<div class="hc" style="left:2px;top:41px;width:39px;height:18px;line-height:17px;padding-left:0px;"></div>
<div class="cell" style="left:41px;top:41px;width:70px;height:18px;line-height:19px;padding-left:3px;"><span>TEXT</span></div>
<div class="cell" style="left:111px;top:41px;width:700px;height:18px;line-height:19px;padding-left:3px;"><span>2110</span></div>
<div class="cell" style="left:811px;top:41px;width:21px;height:18px;line-height:19px;padding-left:0px;"><svg class="a" style="left:2px;top:1px" width="17" height="16"><use href="#sq"/></svg></div>
<div class="cell" style="left:832px;top:41px;width:21px;height:18px;line-height:19px;padding-left:0px;"><div class="a" style="left:0;top:0;width:20px;text-align:center;font-family:'Liberation Serif',serif;font-size:12.500px;line-height:17px;color:#444">Σ</div></div>
<div class="hc" style="left:2px;top:59px;width:39px;height:18px;line-height:17px;padding-left:0px;"><svg class="a" style="left:5px;top:6px" width="6" height="6" viewBox="0 0 6 6"><path d="M3 0.300V5.700M0.600 1.600 5.400 4.400M5.400 1.600 0.600 4.400" stroke="#666" stroke-width="1.200" fill="none"/></svg></div>
<div class="cell" style="left:41px;top:59px;width:70px;height:18px;line-height:19px;padding-left:3px;"></div>
<div class="cell" style="left:111px;top:59px;width:700px;height:18px;line-height:19px;padding-left:3px;"></div>
<div class="cell" style="left:811px;top:59px;width:21px;height:18px;line-height:19px;padding-left:0px;"><svg class="a" style="left:2px;top:1px" width="17" height="16"><use href="#sq"/></svg></div>
<div class="cell" style="left:832px;top:59px;width:21px;height:18px;line-height:19px;padding-left:0px;"><div class="a" style="left:0;top:0;width:20px;text-align:center;font-family:'Liberation Serif',serif;font-size:12.500px;line-height:17px;color:#444">Σ</div></div>
</div>
<div class="hdr" style="left:381px;top:407px;width:867px"><span>Valores Propuestos</span></div>
<div class="sec" style="left:381px;top:427px;width:867px;height:259px"></div>
<div class="t" style="left:1184px;top:410px;font-size:11px;letter-spacing:.1px;color:#0000e0;text-decoration:underline">Ordenar</div>
<div class="grid" style="left:384px;top:429px;width:861px;height:230px">
<div class="a" style="left:0;top:0;width:730px;height:133px;background:#fff"></div><div class="a" style="left:1px;top:1px;width:729px;height:132px;background:#a0a0a0"></div>
<div class="hc" style="left:2px;top:2px;width:39px;height:21px;line-height:20px;padding-left:0px;"></div>
<div class="hc" style="left:41px;top:2px;width:44px;height:21px;line-height:20px;padding-left:8px;">Ancho</div>
<div class="hc" style="left:85px;top:2px;width:21px;height:21px;line-height:20px;padding-left:0px;"></div>
<div class="hc" style="left:106px;top:2px;width:21px;height:21px;line-height:20px;padding-left:0px;"></div>
<div class="hc" style="left:127px;top:2px;width:93px;height:21px;line-height:20px;padding-left:8px;">Altura</div>
<div class="hc" style="left:220px;top:2px;width:21px;height:21px;line-height:20px;padding-left:0px;"></div>
<div class="hc" style="left:241px;top:2px;width:21px;height:21px;line-height:20px;padding-left:0px;"></div>
<div class="hc" style="left:262px;top:2px;width:102px;height:21px;line-height:20px;padding-left:8px;">Profundidad</div>
<div class="hc" style="left:364px;top:2px;width:21px;height:21px;line-height:20px;padding-left:0px;"></div>
<div class="hc" style="left:385px;top:2px;width:21px;height:21px;line-height:20px;padding-left:0px;"></div>
<div class="hc" style="left:406px;top:2px;width:126px;height:21px;line-height:20px;padding-left:7px;">SYSTEM_TAG</div>
<div class="hc" style="left:532px;top:2px;width:73px;height:21px;line-height:20px;padding-left:7px;">ITEM_BASE</div>
<div class="hc" style="left:605px;top:2px;width:21px;height:21px;line-height:20px;padding-left:0px;"></div>
<div class="hc" style="left:626px;top:2px;width:21px;height:21px;line-height:20px;padding-left:0px;"></div>
<div class="hc" style="left:647px;top:2px;width:41px;height:21px;line-height:20px;padding-left:7px;">TEXT</div>
<div class="hc" style="left:688px;top:2px;width:21px;height:21px;line-height:20px;padding-left:0px;"></div>
<div class="hc" style="left:709px;top:2px;width:21px;height:21px;line-height:20px;padding-left:0px;"></div>
<div class="hc" style="left:2px;top:23px;width:39px;height:22px;line-height:21px;padding-left:0px;"><svg class="a" style="left:5px;top:6px" width="6" height="10"><path d="M0 0 5.500 4.700 0 9.400z" fill="#3c3c3c"/></svg></div>
<div class="cell sel" style="left:41px;top:23px;width:44px;height:22px;line-height:23px;padding-left:3px;"><span>1000</span></div>
<div class="cell" style="left:85px;top:23px;width:21px;height:22px;line-height:23px;padding-left:0px;"><svg class="a" style="left:2px;top:3px" width="17" height="16"><use href="#sq"/></svg></div>
<div class="cell" style="left:106px;top:23px;width:21px;height:22px;line-height:23px;padding-left:0px;"><div class="a" style="left:0;top:0;width:20px;text-align:center;font-family:'Liberation Serif',serif;font-size:12.500px;line-height:21px;color:#444">Σ</div></div>
<div class="cell gi" style="left:127px;top:23px;width:93px;height:22px;line-height:23px;padding-left:3px;"><span>#COZ_ALT_INF#</span></div>
<div class="cell" style="left:220px;top:23px;width:21px;height:22px;line-height:23px;padding-left:0px;"><svg class="a" style="left:2px;top:3px" width="17" height="16"><use href="#sq"/></svg></div>
<div class="cell" style="left:241px;top:23px;width:21px;height:22px;line-height:23px;padding-left:0px;"><div class="a" style="left:0;top:0;width:20px;text-align:center;font-family:'Liberation Serif',serif;font-size:12.500px;line-height:21px;color:#444">Σ</div></div>
<div class="cell gi" style="left:262px;top:23px;width:102px;height:22px;line-height:23px;padding-left:3px;"><span>#COZ_PROF_INF#</span></div>
<div class="cell" style="left:364px;top:23px;width:21px;height:22px;line-height:23px;padding-left:0px;"><svg class="a" style="left:2px;top:3px" width="17" height="16"><use href="#sq"/></svg></div>
<div class="cell" style="left:385px;top:23px;width:21px;height:22px;line-height:23px;padding-left:0px;"><div class="a" style="left:0;top:0;width:20px;text-align:center;font-family:'Liberation Serif',serif;font-size:12.500px;line-height:21px;color:#444">Σ</div></div>
<div class="cell" style="left:406px;top:23px;width:126px;height:22px;line-height:23px;padding-left:3px;"></div>
<div class="cell gi" style="left:532px;top:23px;width:73px;height:22px;line-height:23px;padding-left:3px;"><span>MOD001</span></div>
<div class="cell" style="left:605px;top:23px;width:21px;height:22px;line-height:23px;padding-left:0px;"><svg class="a" style="left:2px;top:3px" width="17" height="16"><use href="#sq"/></svg></div>
<div class="cell" style="left:626px;top:23px;width:21px;height:22px;line-height:23px;padding-left:0px;"><div class="a" style="left:0;top:0;width:20px;text-align:center;font-family:'Liberation Serif',serif;font-size:12.500px;line-height:21px;color:#444">Σ</div></div>
<div class="cell gi" style="left:647px;top:23px;width:41px;height:22px;line-height:23px;padding-left:3px;"><span>2110</span></div>
<div class="cell" style="left:688px;top:23px;width:21px;height:22px;line-height:23px;padding-left:0px;"><svg class="a" style="left:2px;top:3px" width="17" height="16"><use href="#sq"/></svg></div>
<div class="cell" style="left:709px;top:23px;width:21px;height:22px;line-height:23px;padding-left:0px;"><div class="a" style="left:0;top:0;width:20px;text-align:center;font-family:'Liberation Serif',serif;font-size:12.500px;line-height:21px;color:#444">Σ</div></div>
<div class="hc" style="left:2px;top:45px;width:39px;height:22px;line-height:21px;padding-left:0px;"></div>
<div class="cell" style="left:41px;top:45px;width:44px;height:22px;line-height:23px;padding-left:3px;"><span>1200</span></div>
<div class="cell" style="left:85px;top:45px;width:21px;height:22px;line-height:23px;padding-left:0px;"><svg class="a" style="left:2px;top:3px" width="17" height="16"><use href="#sq"/></svg></div>
<div class="cell" style="left:106px;top:45px;width:21px;height:22px;line-height:23px;padding-left:0px;"><div class="a" style="left:0;top:0;width:20px;text-align:center;font-family:'Liberation Serif',serif;font-size:12.500px;line-height:21px;color:#444">Σ</div></div>
<div class="cell gi" style="left:127px;top:45px;width:93px;height:22px;line-height:23px;padding-left:3px;"><span>#COZ_ALT_INF#</span></div>
<div class="cell" style="left:220px;top:45px;width:21px;height:22px;line-height:23px;padding-left:0px;"><svg class="a" style="left:2px;top:3px" width="17" height="16"><use href="#sq"/></svg></div>
<div class="cell" style="left:241px;top:45px;width:21px;height:22px;line-height:23px;padding-left:0px;"><div class="a" style="left:0;top:0;width:20px;text-align:center;font-family:'Liberation Serif',serif;font-size:12.500px;line-height:21px;color:#444">Σ</div></div>
<div class="cell gi" style="left:262px;top:45px;width:102px;height:22px;line-height:23px;padding-left:3px;"><span>#COZ_PROF_INF#</span></div>
<div class="cell" style="left:364px;top:45px;width:21px;height:22px;line-height:23px;padding-left:0px;"><svg class="a" style="left:2px;top:3px" width="17" height="16"><use href="#sq"/></svg></div>
<div class="cell" style="left:385px;top:45px;width:21px;height:22px;line-height:23px;padding-left:0px;"><div class="a" style="left:0;top:0;width:20px;text-align:center;font-family:'Liberation Serif',serif;font-size:12.500px;line-height:21px;color:#444">Σ</div></div>
<div class="cell" style="left:406px;top:45px;width:126px;height:22px;line-height:23px;padding-left:3px;"><span>TAGSYSTEM_LOJAS_B</span></div>
<div class="cell gi" style="left:532px;top:45px;width:73px;height:22px;line-height:23px;padding-left:3px;"><span>MOD001</span></div>
<div class="cell" style="left:605px;top:45px;width:21px;height:22px;line-height:23px;padding-left:0px;"><svg class="a" style="left:2px;top:3px" width="17" height="16"><use href="#sq"/></svg></div>
<div class="cell" style="left:626px;top:45px;width:21px;height:22px;line-height:23px;padding-left:0px;"><div class="a" style="left:0;top:0;width:20px;text-align:center;font-family:'Liberation Serif',serif;font-size:12.500px;line-height:21px;color:#444">Σ</div></div>
<div class="cell gi" style="left:647px;top:45px;width:41px;height:22px;line-height:23px;padding-left:3px;"><span>2110</span></div>
<div class="cell" style="left:688px;top:45px;width:21px;height:22px;line-height:23px;padding-left:0px;"><svg class="a" style="left:2px;top:3px" width="17" height="16"><use href="#sq"/></svg></div>
<div class="cell" style="left:709px;top:45px;width:21px;height:22px;line-height:23px;padding-left:0px;"><div class="a" style="left:0;top:0;width:20px;text-align:center;font-family:'Liberation Serif',serif;font-size:12.500px;line-height:21px;color:#444">Σ</div></div>
<div class="hc" style="left:2px;top:67px;width:39px;height:22px;line-height:21px;padding-left:0px;"></div>
<div class="cell" style="left:41px;top:67px;width:44px;height:22px;line-height:23px;padding-left:3px;"><span>1400</span></div>
<div class="cell" style="left:85px;top:67px;width:21px;height:22px;line-height:23px;padding-left:0px;"><svg class="a" style="left:2px;top:3px" width="17" height="16"><use href="#sq"/></svg></div>
<div class="cell" style="left:106px;top:67px;width:21px;height:22px;line-height:23px;padding-left:0px;"><div class="a" style="left:0;top:0;width:20px;text-align:center;font-family:'Liberation Serif',serif;font-size:12.500px;line-height:21px;color:#444">Σ</div></div>
<div class="cell gi" style="left:127px;top:67px;width:93px;height:22px;line-height:23px;padding-left:3px;"><span>#COZ_ALT_INF#</span></div>
<div class="cell" style="left:220px;top:67px;width:21px;height:22px;line-height:23px;padding-left:0px;"><svg class="a" style="left:2px;top:3px" width="17" height="16"><use href="#sq"/></svg></div>
<div class="cell" style="left:241px;top:67px;width:21px;height:22px;line-height:23px;padding-left:0px;"><div class="a" style="left:0;top:0;width:20px;text-align:center;font-family:'Liberation Serif',serif;font-size:12.500px;line-height:21px;color:#444">Σ</div></div>
<div class="cell gi" style="left:262px;top:67px;width:102px;height:22px;line-height:23px;padding-left:3px;"><span>#COZ_PROF_INF#</span></div>
<div class="cell" style="left:364px;top:67px;width:21px;height:22px;line-height:23px;padding-left:0px;"><svg class="a" style="left:2px;top:3px" width="17" height="16"><use href="#sq"/></svg></div>
<div class="cell" style="left:385px;top:67px;width:21px;height:22px;line-height:23px;padding-left:0px;"><div class="a" style="left:0;top:0;width:20px;text-align:center;font-family:'Liberation Serif',serif;font-size:12.500px;line-height:21px;color:#444">Σ</div></div>
<div class="cell" style="left:406px;top:67px;width:126px;height:22px;line-height:23px;padding-left:3px;"><span>TAGSYSTEM_LOJAS_B</span></div>
<div class="cell gi" style="left:532px;top:67px;width:73px;height:22px;line-height:23px;padding-left:3px;"><span>MOD001</span></div>
<div class="cell" style="left:605px;top:67px;width:21px;height:22px;line-height:23px;padding-left:0px;"><svg class="a" style="left:2px;top:3px" width="17" height="16"><use href="#sq"/></svg></div>
<div class="cell" style="left:626px;top:67px;width:21px;height:22px;line-height:23px;padding-left:0px;"><div class="a" style="left:0;top:0;width:20px;text-align:center;font-family:'Liberation Serif',serif;font-size:12.500px;line-height:21px;color:#444">Σ</div></div>
<div class="cell gi" style="left:647px;top:67px;width:41px;height:22px;line-height:23px;padding-left:3px;"><span>2110</span></div>
<div class="cell" style="left:688px;top:67px;width:21px;height:22px;line-height:23px;padding-left:0px;"><svg class="a" style="left:2px;top:3px" width="17" height="16"><use href="#sq"/></svg></div>
<div class="cell" style="left:709px;top:67px;width:21px;height:22px;line-height:23px;padding-left:0px;"><div class="a" style="left:0;top:0;width:20px;text-align:center;font-family:'Liberation Serif',serif;font-size:12.500px;line-height:21px;color:#444">Σ</div></div>
<div class="hc" style="left:2px;top:89px;width:39px;height:22px;line-height:21px;padding-left:0px;"></div>
<div class="cell" style="left:41px;top:89px;width:44px;height:22px;line-height:23px;padding-left:3px;"><span>1600</span></div>
<div class="cell" style="left:85px;top:89px;width:21px;height:22px;line-height:23px;padding-left:0px;"><svg class="a" style="left:2px;top:3px" width="17" height="16"><use href="#sq"/></svg></div>
<div class="cell" style="left:106px;top:89px;width:21px;height:22px;line-height:23px;padding-left:0px;"><div class="a" style="left:0;top:0;width:20px;text-align:center;font-family:'Liberation Serif',serif;font-size:12.500px;line-height:21px;color:#444">Σ</div></div>
<div class="cell gi" style="left:127px;top:89px;width:93px;height:22px;line-height:23px;padding-left:3px;"><span>#COZ_ALT_INF#</span></div>
<div class="cell" style="left:220px;top:89px;width:21px;height:22px;line-height:23px;padding-left:0px;"><svg class="a" style="left:2px;top:3px" width="17" height="16"><use href="#sq"/></svg></div>
<div class="cell" style="left:241px;top:89px;width:21px;height:22px;line-height:23px;padding-left:0px;"><div class="a" style="left:0;top:0;width:20px;text-align:center;font-family:'Liberation Serif',serif;font-size:12.500px;line-height:21px;color:#444">Σ</div></div>
<div class="cell gi" style="left:262px;top:89px;width:102px;height:22px;line-height:23px;padding-left:3px;"><span>#COZ_PROF_INF#</span></div>
<div class="cell" style="left:364px;top:89px;width:21px;height:22px;line-height:23px;padding-left:0px;"><svg class="a" style="left:2px;top:3px" width="17" height="16"><use href="#sq"/></svg></div>
<div class="cell" style="left:385px;top:89px;width:21px;height:22px;line-height:23px;padding-left:0px;"><div class="a" style="left:0;top:0;width:20px;text-align:center;font-family:'Liberation Serif',serif;font-size:12.500px;line-height:21px;color:#444">Σ</div></div>
<div class="cell" style="left:406px;top:89px;width:126px;height:22px;line-height:23px;padding-left:3px;"></div>
<div class="cell gi" style="left:532px;top:89px;width:73px;height:22px;line-height:23px;padding-left:3px;"><span>MOD001</span></div>
<div class="cell" style="left:605px;top:89px;width:21px;height:22px;line-height:23px;padding-left:0px;"><svg class="a" style="left:2px;top:3px" width="17" height="16"><use href="#sq"/></svg></div>
<div class="cell" style="left:626px;top:89px;width:21px;height:22px;line-height:23px;padding-left:0px;"><div class="a" style="left:0;top:0;width:20px;text-align:center;font-family:'Liberation Serif',serif;font-size:12.500px;line-height:21px;color:#444">Σ</div></div>
<div class="cell gi" style="left:647px;top:89px;width:41px;height:22px;line-height:23px;padding-left:3px;"><span>2110</span></div>
<div class="cell" style="left:688px;top:89px;width:21px;height:22px;line-height:23px;padding-left:0px;"><svg class="a" style="left:2px;top:3px" width="17" height="16"><use href="#sq"/></svg></div>
<div class="cell" style="left:709px;top:89px;width:21px;height:22px;line-height:23px;padding-left:0px;"><div class="a" style="left:0;top:0;width:20px;text-align:center;font-family:'Liberation Serif',serif;font-size:12.500px;line-height:21px;color:#444">Σ</div></div>
<div class="hc" style="left:2px;top:111px;width:39px;height:22px;line-height:21px;padding-left:0px;"><svg class="a" style="left:5px;top:9px" width="6" height="6" viewBox="0 0 6 6"><path d="M3 0.300V5.700M0.600 1.600 5.400 4.400M5.400 1.600 0.600 4.400" stroke="#666" stroke-width="1.200" fill="none"/></svg></div>
<div class="cell" style="left:41px;top:111px;width:44px;height:22px;line-height:23px;padding-left:3px;"></div>
<div class="cell" style="left:85px;top:111px;width:21px;height:22px;line-height:23px;padding-left:0px;"><svg class="a" style="left:2px;top:3px" width="17" height="16"><use href="#sq"/></svg></div>
<div class="cell" style="left:106px;top:111px;width:21px;height:22px;line-height:23px;padding-left:0px;"><div class="a" style="left:0;top:0;width:20px;text-align:center;font-family:'Liberation Serif',serif;font-size:12.500px;line-height:21px;color:#444">Σ</div></div>
<div class="cell gi" style="left:127px;top:111px;width:93px;height:22px;line-height:23px;padding-left:3px;"></div>
<div class="cell" style="left:220px;top:111px;width:21px;height:22px;line-height:23px;padding-left:0px;"><svg class="a" style="left:2px;top:3px" width="17" height="16"><use href="#sq"/></svg></div>
<div class="cell" style="left:241px;top:111px;width:21px;height:22px;line-height:23px;padding-left:0px;"><div class="a" style="left:0;top:0;width:20px;text-align:center;font-family:'Liberation Serif',serif;font-size:12.500px;line-height:21px;color:#444">Σ</div></div>
<div class="cell gi" style="left:262px;top:111px;width:102px;height:22px;line-height:23px;padding-left:3px;"></div>
<div class="cell" style="left:364px;top:111px;width:21px;height:22px;line-height:23px;padding-left:0px;"><svg class="a" style="left:2px;top:3px" width="17" height="16"><use href="#sq"/></svg></div>
<div class="cell" style="left:385px;top:111px;width:21px;height:22px;line-height:23px;padding-left:0px;"><div class="a" style="left:0;top:0;width:20px;text-align:center;font-family:'Liberation Serif',serif;font-size:12.500px;line-height:21px;color:#444">Σ</div></div>
<div class="cell" style="left:406px;top:111px;width:126px;height:22px;line-height:23px;padding-left:3px;"></div>
<div class="cell gi" style="left:532px;top:111px;width:73px;height:22px;line-height:23px;padding-left:3px;"></div>
<div class="cell" style="left:605px;top:111px;width:21px;height:22px;line-height:23px;padding-left:0px;"><svg class="a" style="left:2px;top:3px" width="17" height="16"><use href="#sq"/></svg></div>
<div class="cell" style="left:626px;top:111px;width:21px;height:22px;line-height:23px;padding-left:0px;"><div class="a" style="left:0;top:0;width:20px;text-align:center;font-family:'Liberation Serif',serif;font-size:12.500px;line-height:21px;color:#444">Σ</div></div>
<div class="cell gi" style="left:647px;top:111px;width:41px;height:22px;line-height:23px;padding-left:3px;"></div>
<div class="cell" style="left:688px;top:111px;width:21px;height:22px;line-height:23px;padding-left:0px;"><svg class="a" style="left:2px;top:3px" width="17" height="16"><use href="#sq"/></svg></div>
<div class="cell" style="left:709px;top:111px;width:21px;height:22px;line-height:23px;padding-left:0px;"><div class="a" style="left:0;top:0;width:20px;text-align:center;font-family:'Liberation Serif',serif;font-size:12.500px;line-height:21px;color:#444">Σ</div></div>
</div>
<svg class="a" style="left:710px;top:418px" width="100" height="44" viewBox="710 418 100 44">
<g fill="none" stroke="#fe0000" stroke-linecap="round" stroke-linejoin="round">
<path d="M721.500 440.300C740 439.900 760 440.600 786 440.600" stroke-width="6.600"/>
<path d="M765.600 427.300C773 434 784 438.300 793.500 440.500" stroke-width="7.200"/>
<path d="M766 455.200C774 449.500 785 443.800 793.500 440.700" stroke-width="7.200"/>
</g>
<path d="M776 435.500 797 440.500 776 446.500z" fill="#fe0000"/>
</svg>
<div class="t" style="left:389px;top:664px;font-size:11px">Modo</div>
<div class="a" style="left:426px;top:660px;width:193px;height:21px;border:1px solid #c2c2c2;background:#fff;border-radius:2px"></div>
<div class="t" style="left:430px;top:664px;font-size:11px">Ningún</div>
<svg class="a" style="left:604px;top:667px" width="11" height="7"><path d="M1 1 5.500 5.500 10 1" fill="none" stroke="#5a5a5a" stroke-width="1"/></svg>
</body></html>
